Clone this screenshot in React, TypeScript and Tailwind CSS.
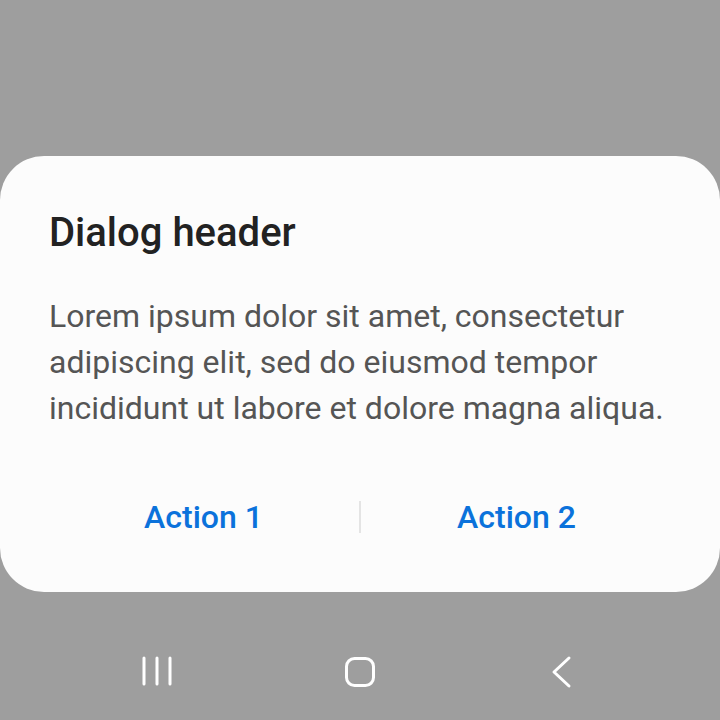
export default function App() {
  return (
    <div className="relative w-[720px] h-[720px] bg-[#9e9e9e] overflow-hidden font-['Roboto','Liberation_Sans',sans-serif]">
      {/* Dialog */}
      <div className="absolute left-0 top-[156px] w-[720px] h-[436px] bg-[#fcfcfc] rounded-[44px] flex flex-col">
        <h1 className="px-[49px] pt-[53px] text-[40px] leading-[48px] font-medium text-[#222222]">
          Dialog header
        </h1>
        <p className="px-[49px] pt-[36px] text-[32px] leading-[46px] text-[#555555]">
          Lorem ipsum dolor sit amet, consectetur adipiscing elit, sed do eiusmod tempor incididunt ut labore et dolore magna aliqua.
        </p>
        <div className="flex items-center px-[48px] mt-[66px]">
          <button className="flex-1 text-center text-[32px] leading-[40px] font-medium text-[#0b72db]">Action 1</button>
          <div className="w-[2px] h-[32px] bg-[#e4e4e4]" />
          <button className="flex-1 text-center text-[32px] leading-[40px] font-medium text-[#0b72db]">Action 2</button>
        </div>
      </div>

      {/* Navigation bar */}
      <div className="absolute left-0 top-[624px] w-[720px] h-[96px]">
        <svg width="720" height="96" viewBox="0 0 720 96">
          <g stroke="#ffffff" strokeWidth="3" strokeLinecap="round" fill="none">
            <line x1="144" y1="34" x2="144" y2="60" />
            <line x1="157" y1="34" x2="157" y2="60" />
            <line x1="170" y1="34" x2="170" y2="60" />
            <rect x="346.5" y="34.5" width="27" height="27" rx="8" />
            <polyline points="569,34 554,48 569,62" strokeLinejoin="round" />
          </g>
        </svg>
      </div>
    </div>
  );
}
